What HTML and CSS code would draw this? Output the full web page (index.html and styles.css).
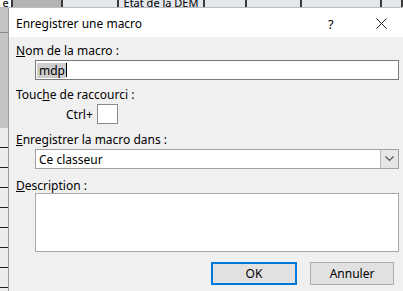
FILE: index.html
```html
<!DOCTYPE html>
<html lang="fr">
<head>
    <meta charset="UTF-8">
    <title>Enregistrer une macro</title>
    <link rel="stylesheet" href="styles.css">
</head>
<body>
    <div class="screen">
        <!-- en-tete de la feuille derriere -->
        <div class="sheet-head">
            <div class="col col-a">e</div>
            <div class="col col-b"></div>
            <div class="col col-c"></div>
            <div class="col col-d">Etat de la DEM</div>
            <div class="col col-e"></div>
            <div class="col col-f"></div>
            <div class="col col-g"></div>
            <div class="col col-h"></div>
        </div>

        <!-- numeros de ligne -->
        <div class="sheet-rows">
            <div class="row-sel"></div>
            <div class="row-sel tall"></div>
            <div class="row"></div>
            <div class="row"></div>
            <div class="row"></div>
            <div class="row"></div>
            <div class="row"></div>
            <div class="row"></div>
            <div class="row"></div>
            <div class="row"></div>
        </div>

        <!-- boite de dialogue -->
        <div class="dialog">
            <div class="titlebar">
                <span class="title">Enregistrer une macro</span>
                <span class="help">?</span>
                <span class="close">
                    <svg width="11" height="11" viewBox="0 0 11 11">
                        <path d="M0.5 0.5 L10.5 10.5 M10.5 0.5 L0.5 10.5" stroke="#222" stroke-width="1" fill="none"/>
                    </svg>
                </span>
            </div>

            <div class="body">
                <div class="label"><u>N</u>om de la macro :</div>
                <div class="field name-field">
                    <span class="sel">mdp</span><span class="caret"></span>
                </div>

                <div class="label shortcut-label">Touc<u>h</u>e de raccourci :</div>
                <div class="ctrl-row">
                    <span>Ctrl+</span>
                    <span class="key-box"></span>
                </div>

                <div class="label store-label"><u>E</u>nregistrer la macro dans :</div>
                <div class="field select">
                    <span class="select-text">Ce classeur</span>
                    <span class="drop">
                        <svg width="9" height="6" viewBox="0 0 9 6">
                            <path d="M0.5 0.5 L4.5 4.5 L8.5 0.5" stroke="#555" stroke-width="1.2" fill="none"/>
                        </svg>
                    </span>
                </div>

                <div class="label desc-label"><u>D</u>escription :</div>
                <div class="field desc"></div>

                <div class="buttons">
                    <button class="btn btn-ok">OK</button>
                    <button class="btn">Annuler</button>
                </div>
            </div>
        </div>
    </div>
</body>
</html>
```

FILE: styles.css
```css
body {
    margin: 0;
    font-family: "Noto Sans", "Open Sans", sans-serif;
    font-size: 12px;
    color: #000;
    overflow: hidden;
}
.screen {
    width: 403px;
    height: 291px;
    display: grid;
    grid-template-columns: 8px 1fr;
    grid-template-rows: 8px 1fr;
    background-color: #fff;
    overflow: hidden;
}

/* feuille excel */
.sheet-head {
    grid-column: 1 / 3;
    display: flex;
    background-color: #e3e6ea;
    border-bottom: 1px solid #b9bec6;
    box-sizing: border-box;
    height: 8px;
    overflow: hidden;
}
.sheet-head .col {
    height: 8px;
    border-right: 2px solid #3b3b3b;
    box-sizing: border-box;
    font-size: 11px;
    line-height: 5px;
    overflow: hidden;
    text-align: center;
}
.col-a { width: 13px; background-color: #fff; text-align: left; line-height: 4px; }
.col-b { width: 50px; background-color: #b4b4b4; }
.col-c { width: 56px; }
.col-d { width: 86px; }
.col-e { width: 42px; }
.col-f { width: 55px; }
.col-g { width: 80px; }
.col-h { width: 21px; border-right: 0; }

.sheet-rows {
    display: flex;
    flex-direction: column;
    background-color: #ececec;
}
.sheet-rows .row-sel {
    height: 24px;
    background-color: #c4c4c4;
    border-bottom: 1px solid #8a8a8a;
}
.sheet-rows .row-sel.tall {
    height: 95px;
    border-bottom: 0;
}
.sheet-rows .row {
    height: 19px;
    border-bottom: 1px solid #222;
}

/* dialogue */
.dialog {
    background-color: #f0f0f0;
    border-left: 1px solid #9a9a9a;
    display: flex;
    flex-direction: column;
}
.titlebar {
    height: 29px;
    background-color: #fff;
    display: flex;
    align-items: center;
    padding-left: 7px;
    padding-top: 2px;
    box-sizing: border-box;
}
.title {
    flex: 1;
}
.help {
    width: 14px;
    margin-right: 34px;
    font-size: 13px;
}
.close {
    width: 11px;
    margin-right: 16px;
    display: flex;
}

.body {
    padding: 6px 0 0 7px;
    display: flex;
    flex-direction: column;
}
.label {
    height: 15px;
    line-height: 15px;
}
.label u {
    text-decoration-thickness: 1px;
}
.field {
    margin-left: 19px;
    width: 364px;
    background-color: #fff;
    border: 1px solid #7a7a7a;
    box-sizing: border-box;
}
.name-field {
    height: 20px;
    margin-top: 2px;
    display: flex;
    align-items: center;
    padding-left: 1px;
}
.sel {
    background-color: #cdcdcd;
    line-height: 15px;
    padding: 0 1px 0 2px;
}
.caret {
    width: 1px;
    height: 14px;
    background-color: #000;
}
.shortcut-label {
    margin-top: 7px;
}
.ctrl-row {
    display: flex;
    align-items: center;
    gap: 4px;
    margin-left: 50px;
    margin-top: 2px;
    height: 20px;
}
.key-box {
    width: 21px;
    height: 20px;
    background-color: #fff;
    border: 1px solid #8a8a8a;
    box-sizing: border-box;
}
.store-label {
    margin-top: 8px;
}
.select {
    height: 20px;
    margin-top: 2px;
    display: flex;
    align-items: center;
    border-color: #a0a0a0;
}
.select-text {
    flex: 1;
    padding-left: 3px;
}
.drop {
    width: 17px;
    height: 18px;
    background-color: #e6e6e6;
    border-left: 1px solid #b8b8b8;
    display: flex;
    align-items: center;
    justify-content: center;
}
.desc-label {
    margin-top: 9px;
}
.desc {
    height: 59px;
    margin-top: 0;
    border-color: #a8a8a8;
}
.buttons {
    display: flex;
    justify-content: flex-end;
    gap: 13px;
    margin-top: 10px;
    padding-right: 9px;
}
.btn {
    width: 84px;
    height: 23px;
    font-family: "Noto Sans", "Open Sans", sans-serif;
    font-size: 12px;
    background-color: #e1e1e1;
    border: 1px solid #adadad;
    padding: 0;
    color: #000;
}
.btn-ok {
    width: 86px;
    border: 2px solid #0078d7;
}
```
